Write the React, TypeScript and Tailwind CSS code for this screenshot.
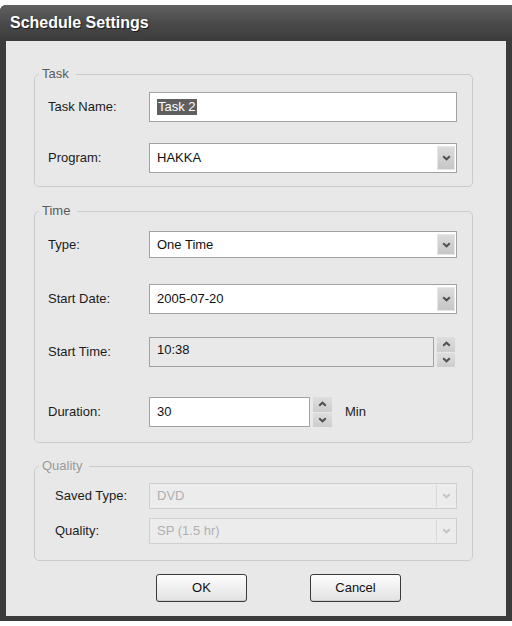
import type { ReactNode } from "react";

const FONT = { fontFamily: '"Liberation Sans", Arial, sans-serif' };

function Chevron({ up = false, disabled = false }: { up?: boolean; disabled?: boolean }) {
  return (
    <svg width="9" height="6" viewBox="0 0 9 6" className={up ? "rotate-180" : ""}>
      <path
        d="M1.2 1.2 L4.5 4.3 L7.8 1.2"
        fill="none"
        stroke={disabled ? "#c4c4c4" : "#505050"}
        strokeWidth="2"
      />
    </svg>
  );
}

function Group({
  title,
  disabled = false,
  className = "",
  children,
}: {
  title: string;
  disabled?: boolean;
  className?: string;
  children: ReactNode;
}) {
  return (
    <fieldset
      className={`border border-[#cbcbcb] rounded-[5px] px-[4px] w-[439px] ${className}`}
    >
      <legend
        className={`text-[13px] leading-[14px] pl-[3px] pr-[7px] ${
          disabled ? "text-[#9a9a9a]" : "text-[#5a5a5a]"
        }`}
      >
        {title}
      </legend>
      {children}
    </fieldset>
  );
}

function Row({
  label,
  indent = "pl-[9px]",
  children,
  className = "",
}: {
  label: string;
  indent?: string;
  children: ReactNode;
  className?: string;
}) {
  return (
    <div className={`flex items-center ${className}`}>
      <div className={`${indent} w-[110px] shrink-0 text-[13px] text-[#1c1c1c]`}>{label}</div>
      {children}
    </div>
  );
}

function Select({
  value,
  h,
  disabled = false,
}: {
  value: string;
  h: string;
  disabled?: boolean;
}) {
  return (
    <div
      className={`w-[308px] ${h} flex items-stretch border ${
        disabled ? "border-[#cfcfcf] bg-[#ececec]" : "border-[#a2a2a2] bg-white"
      }`}
    >
      <div
        className={`flex-1 flex items-center pl-[7px] text-[13px] ${
          disabled ? "text-[#b0b0b0]" : "text-[#111]"
        }`}
      >
        {value}
      </div>
      {disabled ? (
        <div className="w-[19px] my-[1px] mr-[1px] border-l border-[#dadada] flex items-center justify-center">
          <Chevron disabled />
        </div>
      ) : (
        <div className="w-[18px] my-[2px] mr-[1px] bg-gradient-to-b from-[#dcdcdc] to-[#c6c6c6] border border-[#e6e6e6] flex items-center justify-center">
          <Chevron />
        </div>
      )}
    </div>
  );
}

function Spinner({ w }: { w: string }) {
  return (
    <div className={`${w} h-[30px] flex flex-col gap-[1px]`}>
      <div className="flex-1 bg-gradient-to-b from-[#dedede] to-[#cdcdcd] flex items-center justify-center">
        <Chevron up />
      </div>
      <div className="flex-1 bg-gradient-to-b from-[#dedede] to-[#cdcdcd] flex items-center justify-center">
        <Chevron />
      </div>
    </div>
  );
}

function Button({ label }: { label: string }) {
  return (
    <button className="w-[91px] h-[28px] rounded-[3px] border border-[#3a3a3a] bg-gradient-to-b from-[#fdfdfd] to-[#e2e2e2] text-[13px] text-[#111] shadow-[inset_0_-1px_0_#cfcfcf]">
      {label}
    </button>
  );
}

export default function App() {
  return (
    <div className="w-[512px] h-[626px] bg-white pt-[5px]" style={FONT}>
      <div className="h-[616px] flex flex-col bg-[#3b3b3b] rounded-tl-[6px] rounded-tr-[3px]">
        {/* ── Title bar ─────────────────────────────── */}
        <div className="h-[36px] shrink-0 flex items-center pl-[10px] rounded-tl-[6px] bg-gradient-to-b from-[#616161] via-[#4a4a4a] to-[#3b3b3b]">
          <span className="text-white font-bold text-[16px] [text-shadow:1px_1px_1px_#1a1a1a]">
            Schedule Settings
          </span>
        </div>

        {/* ── Dialog body ───────────────────────────── */}
        <div className="flex-1 mx-[6px] mb-[5px] bg-[#e8e8e8] pt-[26px] pl-[28px] flex flex-col">
          <Group title="Task">
            <div className="pt-[11px] pb-[13px] flex flex-col gap-[21px]">
              <Row label="Task Name:">
                <div className="w-[308px] h-[30px] border border-[#a2a2a2] bg-white flex items-center pl-[7px]">
                  <span className="bg-[#5f5f5f] text-white text-[13px] leading-[16px] px-[1px]">
                    Task 2
                  </span>
                </div>
              </Row>
              <Row label="Program:">
                <Select value="HAKKA" h="h-[30px]" />
              </Row>
            </div>
          </Group>

          <Group title="Time" className="mt-[17px]">
            <div className="pt-[13px] pb-[15px] flex flex-col">
              <Row label="Type:">
                <Select value="One Time" h="h-[27px]" />
              </Row>
              <Row label="Start Date:" className="mt-[26px]">
                <Select value="2005-07-20" h="h-[30px]" />
              </Row>
              <Row label="Start Time:" className="mt-[23px]">
                <div className="w-[285px] h-[30px] border border-[#a2a2a2] bg-[#e9e9e9] pl-[7px] pt-[2px] text-[13px] text-[#111]">
                  10:38
                </div>
                <div className="ml-[3px]">
                  <Spinner w="w-[18px]" />
                </div>
              </Row>
              <Row label="Duration:" className="mt-[30px]">
                <div className="w-[161px] h-[30px] border border-[#a2a2a2] bg-white pl-[7px] pt-[4px] text-[13px] text-[#111]">
                  30
                </div>
                <div className="ml-[3px]">
                  <Spinner w="w-[19px]" />
                </div>
                <span className="ml-[13px] text-[13px] text-[#1c1c1c]">Min</span>
              </Row>
            </div>
          </Group>

          <Group title="Quality" disabled className="mt-[16px]">
            <div className="pt-[10px] pb-[16px] flex flex-col gap-[9px]">
              <Row label="Saved Type:" indent="pl-[16px]">
                <Select value="DVD" h="h-[26px]" disabled />
              </Row>
              <Row label="Quality:" indent="pl-[16px]">
                <Select value="SP (1.5 hr)" h="h-[26px]" disabled />
              </Row>
            </div>
          </Group>

          <div className="mt-[13px] pl-[122px] flex gap-[63px]">
            <Button label="OK" />
            <Button label="Cancel" />
          </div>
        </div>
      </div>
    </div>
  );
}
